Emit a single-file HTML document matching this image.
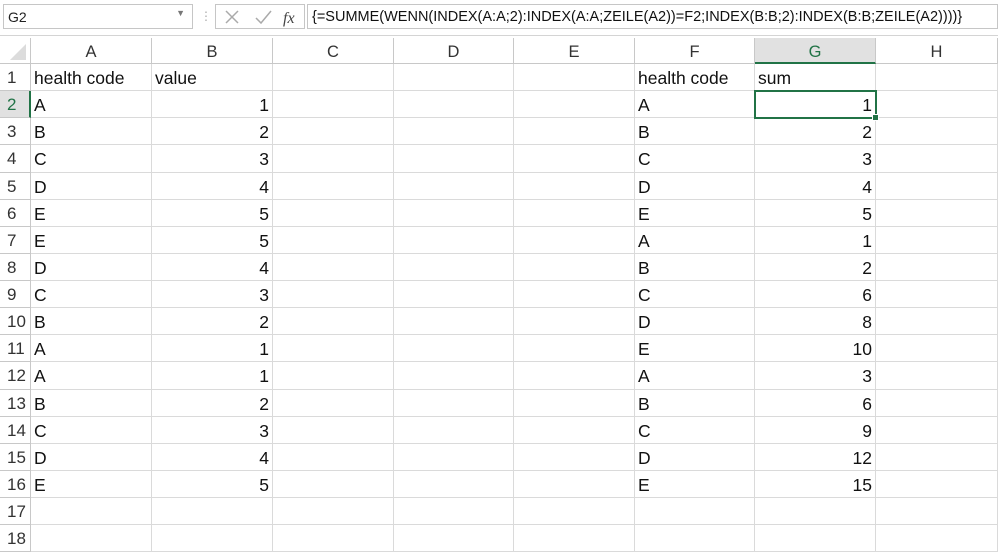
<!DOCTYPE html>
<html><head><meta charset="utf-8"><style>
*{box-sizing:border-box;margin:0;padding:0}
body{width:998px;height:552px;overflow:hidden;background:#fff;font-family:"Liberation Sans",sans-serif;position:relative}
.fb{position:absolute;left:0;top:0;width:998px;height:36px;background:#fff;border-bottom:1px solid #d4d4d4}
.nb{position:absolute;left:3px;top:4px;width:190px;height:25px;border:1px solid #c6c6c6;font-size:14px;padding:4px 4px;color:#222}
.nb span{position:absolute;right:7px;top:3px;font-size:9px;color:#777}
.dots{position:absolute;left:200px;top:9px;color:#aaa;font-size:12px}
.ic{position:absolute;left:215px;top:4px;width:90px;height:25px;border:1px solid #c6c6c6}
.fx{position:absolute;left:307px;top:4px;width:691px;height:25px;border:1px solid #c6c6c6;font-size:14.5px;padding:4px 4px;color:#111;white-space:nowrap}
.g{position:absolute;left:0;top:38px;display:grid;grid-template-columns:31px 121px 121px 121px 120px 121px 120px 121px 122px;grid-template-rows:26px repeat(18,27.13px)}
.g div{position:relative;border-right:1px solid #dadada;border-bottom:1px solid #dadada;font-size:17.5px;color:#111;padding:3px 3px 0;white-space:nowrap;overflow:hidden;line-height:22px}
.g .h{text-align:center;color:#333;border-color:#c8c8c8;background:#fff;font-size:16.5px}
.g .r{text-align:left;padding-left:7px;color:#333;border-color:#c8c8c8;font-size:17px}
.g .n{text-align:right}
.g .hs{background:#e1e1e1;color:#217346;border-bottom:2px solid #217346}
.g .rs{color:#217346;border-right:2px solid #217346;background:#e1e1e1}
.sel{position:absolute;left:754px;top:90px;width:123px;height:29px;border:2px solid #217346}
.sel:after{content:"";position:absolute;right:-4px;bottom:-4px;width:5px;height:5px;background:#217346;border:1px solid #fff}
</style></head><body>
<div class="fb">
<div class="nb">G2<span>▼</span></div>
<div class="dots">⋮</div>
<div class="ic">
<svg width="90" height="25" style="position:absolute;left:0;top:0"><path d="M10 6 L22 18 M22 6 L10 18" stroke="#aaa" stroke-width="1.5" fill="none"/><path d="M40 13 L45 18 L55 6" stroke="#aaa" stroke-width="1.5" fill="none"/><text x="67" y="18" font-family="Liberation Serif" font-style="italic" font-size="16" fill="#444">fx</text></svg>
</div>
<div class="fx">{=SUMME(WENN(INDEX(A:A;2):INDEX(A:A;ZEILE(A2))=F2;INDEX(B:B;2):INDEX(B:B;ZEILE(A2))))}</div>
</div>
<div class="g">
<div class="h"><svg width="20" height="20" style="position:absolute;left:10px;top:6px"><path d="M16 0 L16 16 L0 16 Z" fill="#dcdcdc"/></svg></div><div class="h">A</div><div class="h">B</div><div class="h">C</div><div class="h">D</div><div class="h">E</div><div class="h">F</div><div class="h hs">G</div><div class="h">H</div>
<div class="r">1</div><div>health code</div><div>value</div><div></div><div></div><div></div><div>health code</div><div>sum</div><div></div>
<div class="r rs">2</div><div>A</div><div class="n">1</div><div></div><div></div><div></div><div>A</div><div class="n">1</div><div></div>
<div class="r">3</div><div>B</div><div class="n">2</div><div></div><div></div><div></div><div>B</div><div class="n">2</div><div></div>
<div class="r">4</div><div>C</div><div class="n">3</div><div></div><div></div><div></div><div>C</div><div class="n">3</div><div></div>
<div class="r">5</div><div>D</div><div class="n">4</div><div></div><div></div><div></div><div>D</div><div class="n">4</div><div></div>
<div class="r">6</div><div>E</div><div class="n">5</div><div></div><div></div><div></div><div>E</div><div class="n">5</div><div></div>
<div class="r">7</div><div>E</div><div class="n">5</div><div></div><div></div><div></div><div>A</div><div class="n">1</div><div></div>
<div class="r">8</div><div>D</div><div class="n">4</div><div></div><div></div><div></div><div>B</div><div class="n">2</div><div></div>
<div class="r">9</div><div>C</div><div class="n">3</div><div></div><div></div><div></div><div>C</div><div class="n">6</div><div></div>
<div class="r">10</div><div>B</div><div class="n">2</div><div></div><div></div><div></div><div>D</div><div class="n">8</div><div></div>
<div class="r">11</div><div>A</div><div class="n">1</div><div></div><div></div><div></div><div>E</div><div class="n">10</div><div></div>
<div class="r">12</div><div>A</div><div class="n">1</div><div></div><div></div><div></div><div>A</div><div class="n">3</div><div></div>
<div class="r">13</div><div>B</div><div class="n">2</div><div></div><div></div><div></div><div>B</div><div class="n">6</div><div></div>
<div class="r">14</div><div>C</div><div class="n">3</div><div></div><div></div><div></div><div>C</div><div class="n">9</div><div></div>
<div class="r">15</div><div>D</div><div class="n">4</div><div></div><div></div><div></div><div>D</div><div class="n">12</div><div></div>
<div class="r">16</div><div>E</div><div class="n">5</div><div></div><div></div><div></div><div>E</div><div class="n">15</div><div></div>
<div class="r">17</div><div></div><div></div><div></div><div></div><div></div><div></div><div></div><div></div>
<div class="r">18</div><div></div><div></div><div></div><div></div><div></div><div></div><div></div><div></div>
</div>
<div class="sel"></div>
</body></html>
